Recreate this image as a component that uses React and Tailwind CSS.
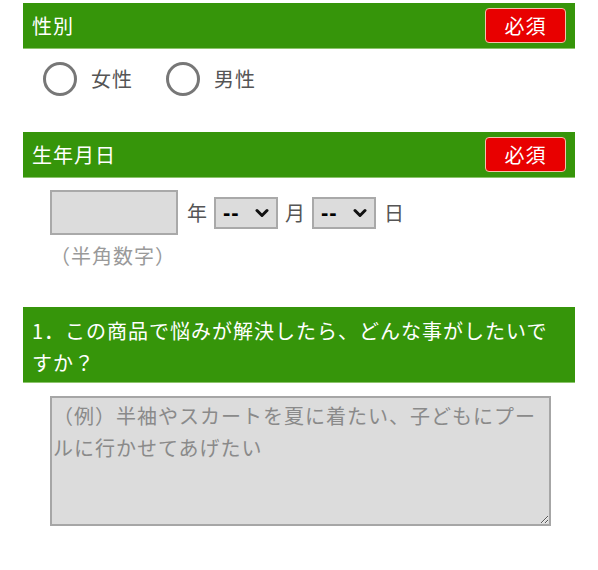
import React from "react";

const font = { fontFamily: '"Noto Sans CJK JP", "Noto Sans", sans-serif' };

function Header({ children, required }) {
  return (
    <div className="flex items-center justify-between bg-[#36950a] border-b border-[#8cc46c] pl-[9px] pr-[9px] py-[5px] min-h-[46px]">
      <div className="text-white text-[20px] leading-[32px] tracking-[1px]">{children}</div>
      {required && (
        <div className="flex items-center justify-center w-[81px] h-[35px] shrink-0 bg-[#e80000] border border-[#f3c2aa] rounded-[4px] text-white text-[20px] tracking-[1px]">
          必須
        </div>
      )}
    </div>
  );
}

function Radio({ label }) {
  return (
    <label className="flex items-center gap-[14px]">
      <span className="w-[34px] h-[34px] rounded-full border-[3px] border-[#777777] bg-white" />
      <span className="text-[20px] leading-[32px] tracking-[1px] text-[#555555]">{label}</span>
    </label>
  );
}

function Select() {
  return (
    <div className="flex items-center w-[64px] h-[32px] bg-[#dcdcdc] border-2 border-[#a9a9a9]">
      <select
        className="appearance-none bg-transparent outline-none flex-1 min-w-0 pl-[7px] text-[22px] font-bold tracking-[1px] leading-[28px] text-black"
        style={{ fontFamily: '"Liberation Sans", Arial, sans-serif' }}
      >
        <option>--</option>
      </select>
      <svg width="14" height="10" viewBox="0 0 14 10" className="mr-[7px] shrink-0">
        <path d="M2 2.5 L7 7.5 L12 2.5" fill="none" stroke="#111" strokeWidth="3" strokeLinecap="round" strokeLinejoin="round" />
      </svg>
    </div>
  );
}

export default function App() {
  return (
    <div className="bg-white px-[23px] pt-[3px] pb-[40px]" style={font}>
      <Header required>性別</Header>
      <div className="flex items-center gap-[33px] pl-[20px] pt-[13px]">
        <Radio label="女性" />
        <Radio label="男性" />
      </div>

      <div className="mt-[36px]">
        <Header required>生年月日</Header>
      </div>
      <div className="pl-[27px] pt-[12px]">
        <div className="flex items-center text-[20px] leading-[32px] text-[#555555]">
          <input type="text" className="w-[128px] h-[45px] bg-[#dcdcdc] border-2 border-[#a9a9a9] outline-none" />
          <span className="ml-[9px] mr-[6px] tracking-[1px]">年</span>
          <Select />
          <span className="ml-[7px] mr-[6px] tracking-[1px]">月</span>
          <Select />
          <span className="ml-[8px] tracking-[1px]">日</span>
        </div>
        <div className="mt-[5px] text-[20px] leading-[32px] tracking-[1px] text-[#9a9a9a]">（半角数字）</div>
      </div>

      <div className="mt-[35px]">
        <div className="bg-[#36950a] border-b border-[#8cc46c] pl-[9px] pr-[9px] pt-[8px] pb-[3px]">
          <div className="text-white text-[20px] leading-[32px] tracking-[1px]">
            1．この商品で悩みが解決したら、どんな事がしたいですか？
          </div>
        </div>
      </div>
      <div className="pl-[27px] pr-[24px] pt-[13px]">
        <textarea
          className="block w-full h-[130px] bg-[#dcdcdc] border-2 border-[#a6a6a6] px-[1px] pt-[2px] text-[20px] leading-[32px] tracking-[1px] text-[#333] placeholder:text-[#8a8a8a] outline-none resize-y"
          placeholder="（例）半袖やスカートを夏に着たい、子どもにプールに行かせてあげたい"
        />
      </div>
    </div>
  );
}
